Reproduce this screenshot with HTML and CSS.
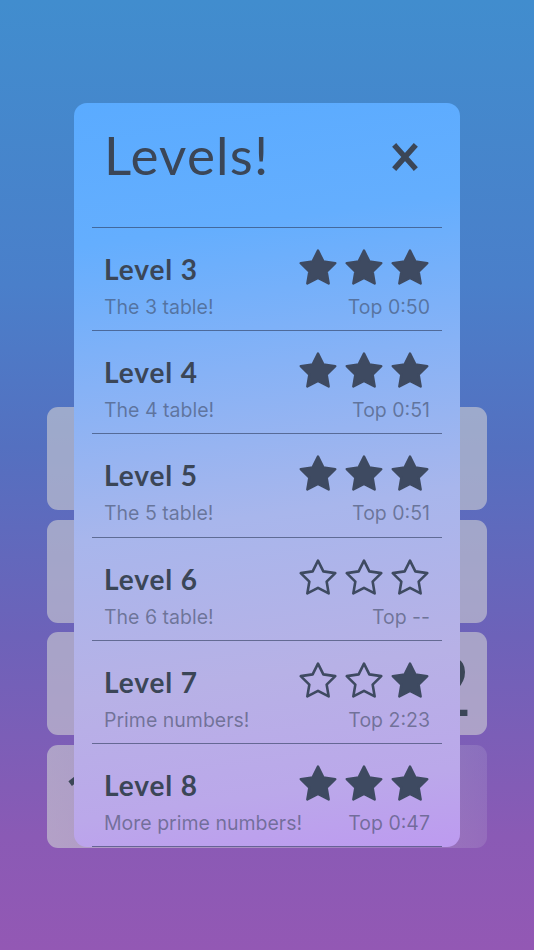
FILE: index.html
```html
<!DOCTYPE html>
<html lang="en">
<head>
<meta charset="utf-8">
<title>Levels</title>
<link rel="stylesheet" href="styles.css">
</head>
<body>
<svg class="defs" width="0" height="0" aria-hidden="true">
  <defs>
    <path id="star" d="M12 2l3.09 6.26L22 9.27l-5 4.87 1.18 6.88L12 17.77l-6.18 3.25L7 14.14 2 9.27l6.91-1.01L12 2z"/>
  </defs>
</svg>

<main class="board">
  <div class="card"></div>
  <div class="card"></div>
  <div class="card card-end"><span class="digit">2</span></div>
  <div class="card card-fade"><span class="digit digit-one">1</span></div>
</main>

<section class="modal">
  <header class="modal-head">
    <h1 class="modal-title">Levels!</h1>
    <button class="close" aria-label="Close">
      <svg width="26" height="28" viewBox="0 0 26 28"><path d="M4 4L22 24M22 4L4 24" stroke="#3b4657" stroke-width="5.5" stroke-linecap="square" fill="none"/></svg>
    </button>
  </header>
  <ul class="levels">
    <li class="level">
      <div class="level-top">
        <span class="level-name">Level 3</span>
        <span class="stars">
          <svg class="star full" viewBox="0.5 0.5 23 22"><use href="#star"/></svg>
          <svg class="star full" viewBox="0.5 0.5 23 22"><use href="#star"/></svg>
          <svg class="star full" viewBox="0.5 0.5 23 22"><use href="#star"/></svg>
        </span>
      </div>
      <div class="level-sub"><span>The 3 table!</span><span>Top 0:50</span></div>
    </li>
    <li class="level">
      <div class="level-top">
        <span class="level-name">Level 4</span>
        <span class="stars">
          <svg class="star full" viewBox="0.5 0.5 23 22"><use href="#star"/></svg>
          <svg class="star full" viewBox="0.5 0.5 23 22"><use href="#star"/></svg>
          <svg class="star full" viewBox="0.5 0.5 23 22"><use href="#star"/></svg>
        </span>
      </div>
      <div class="level-sub"><span>The 4 table!</span><span>Top 0:51</span></div>
    </li>
    <li class="level">
      <div class="level-top">
        <span class="level-name">Level 5</span>
        <span class="stars">
          <svg class="star full" viewBox="0.5 0.5 23 22"><use href="#star"/></svg>
          <svg class="star full" viewBox="0.5 0.5 23 22"><use href="#star"/></svg>
          <svg class="star full" viewBox="0.5 0.5 23 22"><use href="#star"/></svg>
        </span>
      </div>
      <div class="level-sub"><span>The 5 table!</span><span>Top 0:51</span></div>
    </li>
    <li class="level">
      <div class="level-top">
        <span class="level-name">Level 6</span>
        <span class="stars">
          <svg class="star empty" viewBox="0.5 0.5 23 22"><use href="#star"/></svg>
          <svg class="star empty" viewBox="0.5 0.5 23 22"><use href="#star"/></svg>
          <svg class="star empty" viewBox="0.5 0.5 23 22"><use href="#star"/></svg>
        </span>
      </div>
      <div class="level-sub"><span>The 6 table!</span><span>Top --</span></div>
    </li>
    <li class="level">
      <div class="level-top">
        <span class="level-name">Level 7</span>
        <span class="stars">
          <svg class="star empty" viewBox="0.5 0.5 23 22"><use href="#star"/></svg>
          <svg class="star empty" viewBox="0.5 0.5 23 22"><use href="#star"/></svg>
          <svg class="star full" viewBox="0.5 0.5 23 22"><use href="#star"/></svg>
        </span>
      </div>
      <div class="level-sub"><span>Prime numbers!</span><span>Top 2:23</span></div>
    </li>
    <li class="level">
      <div class="level-top">
        <span class="level-name">Level 8</span>
        <span class="stars">
          <svg class="star full" viewBox="0.5 0.5 23 22"><use href="#star"/></svg>
          <svg class="star full" viewBox="0.5 0.5 23 22"><use href="#star"/></svg>
          <svg class="star full" viewBox="0.5 0.5 23 22"><use href="#star"/></svg>
        </span>
      </div>
      <div class="level-sub"><span>More prime numbers!</span><span>Top 0:47</span></div>
    </li>
  </ul>
</section>
</body>
</html>
```
FILE: styles.css
```css
* { box-sizing: border-box; }

html, body {
  margin: 0;
  padding: 0;
}

body {
  width: 534px;
  height: 950px;
  overflow: hidden;
  position: relative;
  background: linear-gradient(180deg, #418dce 0%, #4a7fca 30%, #5470c0 47%, #6d62b9 67%, #8a5ab5 88%, #9358b4 100%);
  font-family: "Inter", "Liberation Sans", sans-serif;
}

.defs { position: absolute; }

.board {
  display: flex;
  flex-direction: column;
  gap: 9.5px;
  padding: 407px 47px 0 47px;
}

.card {
  height: 103px;
  border-radius: 11px;
  background: rgba(204, 204, 210, 0.62);
  display: flex;
  align-items: center;
  overflow: hidden;
}

.card-end {
  justify-content: flex-end;
  padding-right: 15px;
}

.card-fade {
  background: linear-gradient(90deg, rgba(204, 204, 210, 0.62) 0%, rgba(204, 204, 210, 0.45) 50%, rgba(190, 180, 215, 0.2) 100%);
  padding-left: 14px;
  align-items: flex-start;
  padding-top: 10px;
}

.digit {
  font-family: "Open Sans", "Liberation Sans", sans-serif;
  font-weight: 500;
  font-size: 82px;
  line-height: 1;
  color: #3b4657;
}

.modal {
  position: absolute;
  top: 103px;
  left: 74px;
  width: 386px;
  height: 744px;
  border-radius: 13px;
  overflow: hidden;
  background: linear-gradient(172deg, #5aabff 0%, #64aefe 18%, #86b2f6 36%, #a8b6ec 55%, #b7b1e6 75%, #bba8ea 90%, #bd9af0 100%);
}

.modal-head {
  height: 124px;
  display: flex;
  align-items: flex-start;
  justify-content: space-between;
  padding: 22px 42px 0 30px;
}

.modal-title {
  margin: 0;
  font-family: "Lato", "Liberation Sans", sans-serif;
  font-weight: 400;
  font-size: 53px;
  line-height: 60px;
  color: #3b4657;
  letter-spacing: 1.2px;
}

.close {
  border: 0;
  background: none;
  padding: 0;
  margin-top: 18px;
  width: 26px;
  height: 28px;
  display: block;
}

.close svg { display: block; }

.levels {
  list-style: none;
  margin: 0 18px;
  padding: 0;
  border-top: 1px solid rgba(45, 58, 92, 0.6);
}

.level {
  height: 103.2px;
  padding: 18px 12px 0 12px;
  border-bottom: 1px solid rgba(45, 58, 92, 0.6);
}

.level-top {
  height: 42px;
  display: flex;
  align-items: center;
  justify-content: space-between;
}

.level-name {
  font-family: "Lato", "Liberation Sans", sans-serif;
  font-weight: 700;
  font-size: 28px;
  letter-spacing: 0.9px;
  color: #3b4657;
  padding-top: 4px;
}

.stars {
  display: flex;
  gap: 6px;
}

.star {
  width: 40px;
  height: 38px;
  display: block;
}

.star.full {
  fill: #3e4a61;
  stroke: #3e4a61;
  stroke-width: 1.4;
  stroke-linejoin: round;
}

.star.empty {
  fill: none;
  stroke: #3e4a61;
  stroke-width: 1.5;
  stroke-linejoin: round;
}

.level-sub {
  margin-top: 8px;
  height: 22px;
  display: flex;
  justify-content: space-between;
  align-items: center;
  font-size: 19.5px;
  line-height: 22px;
  color: rgba(58, 68, 92, 0.56);
}
```
